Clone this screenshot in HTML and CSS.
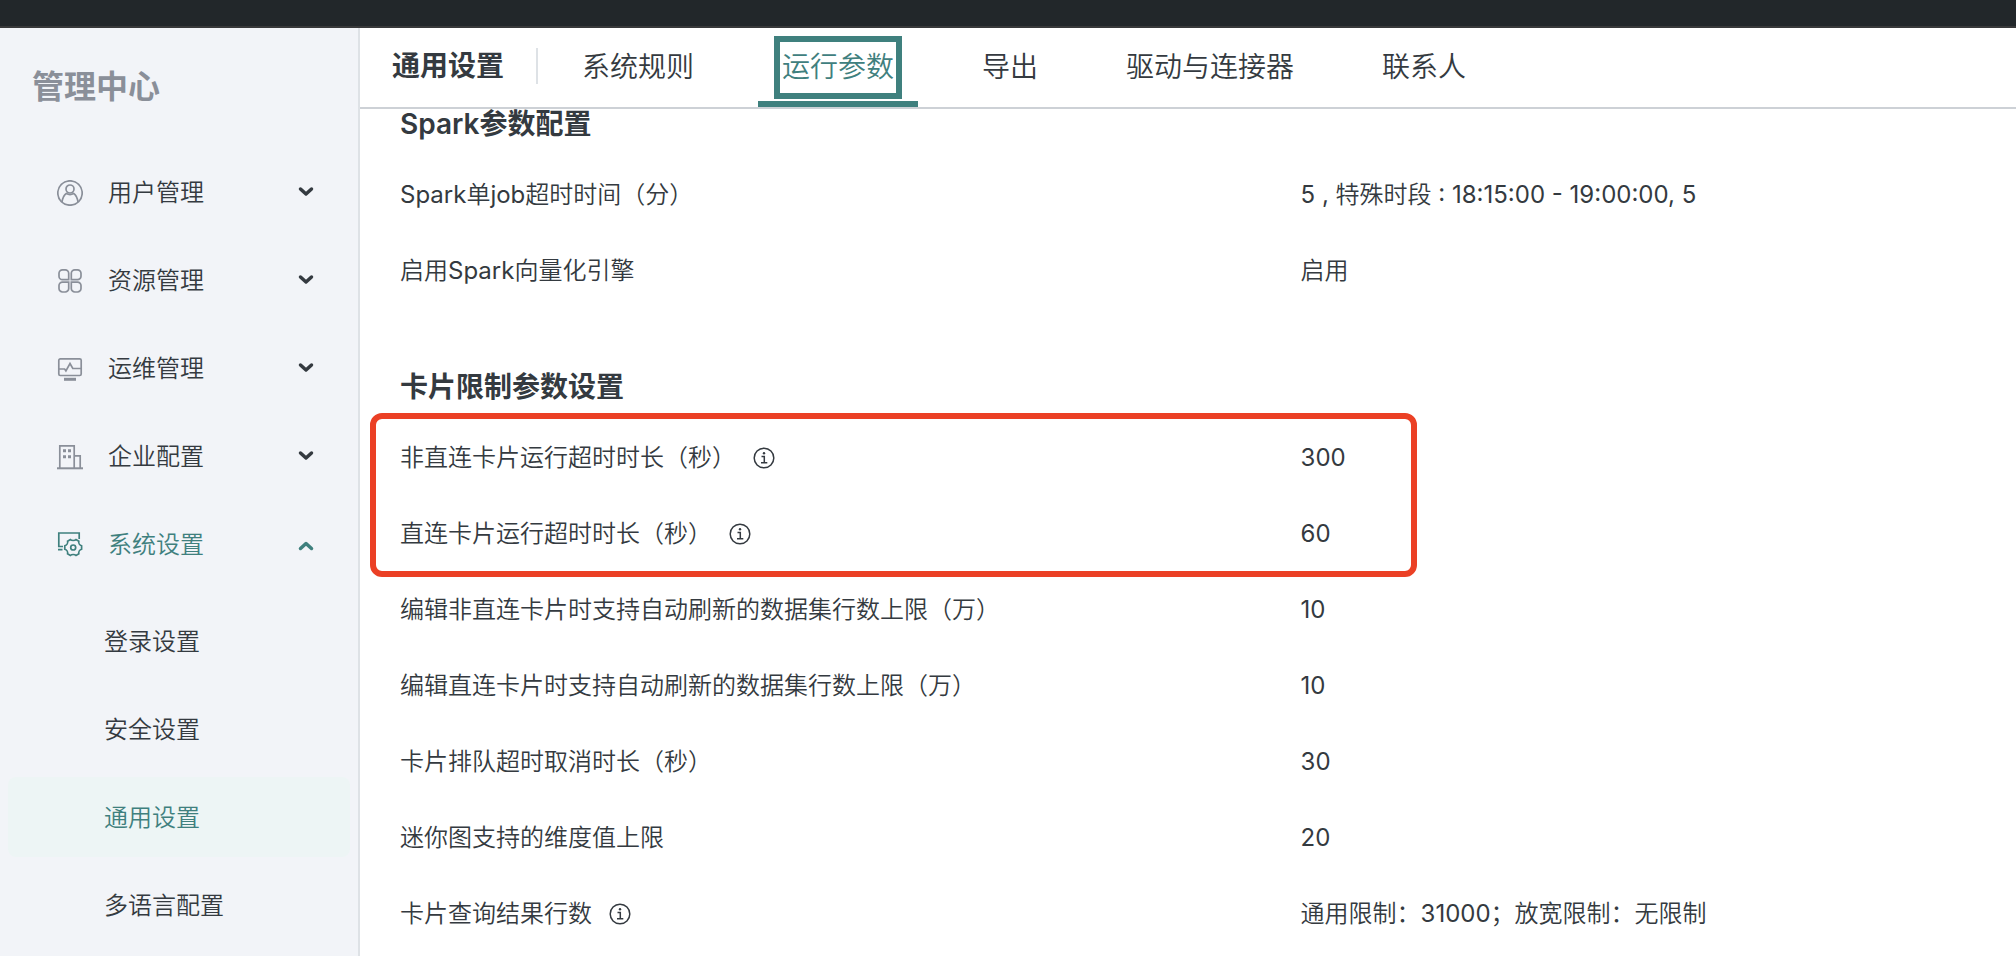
FILE: index.html
```html
<!DOCTYPE html>
<html lang="zh-CN">
  <head>
    <meta charset="UTF-8" />
    <meta name="viewport" content="width=device-width, initial-scale=1.0" />
    <title>管理中心 - 通用设置</title>
    <link rel="stylesheet" href="styles.css">
  </head>
  <body>
    <div class="topbar"></div>

    <div class="layout">
      <!-- Sidebar -->
      <aside class="sidebar">
        <h1 class="sidebar-title">管理中心</h1>

        <nav class="menu">
          <button class="menu-item" type="button" aria-expanded="false">
            <svg class="menu-icon" viewBox="0 0 26 26">
              <circle cx="13" cy="13" r="12.2" />
              <circle cx="13" cy="9" r="4" />
              <path d="M5 22.2c.6-4.400 2.300-7.400 4.300-8.700 2.300 1.300 5.100 1.300 7.400 0 2 1.300 3.700 4.300 4.300 8.700" />
            </svg>
            <span class="menu-label">用户管理</span>
            <svg class="arrow" viewBox="0 0 16 16"><path d="M2.500 4 8 9l5.500-5" /></svg>
          </button>

          <button class="menu-item" type="button" aria-expanded="false">
            <svg class="menu-icon" viewBox="0 0 26 26">
              <path d="M11.700 11.700H5.500A3.500 3.500 0 0 1 2 8.200V5.300a3.500 3.500 0 0 1 3.500-3.500h2.700a3.500 3.500 0 0 1 3.500 3.500z" />
              <path d="M14.300 11.700h6.200A3.500 3.500 0 0 0 24 8.200V5.300a3.500 3.500 0 0 0-3.500-3.500h-2.700a3.500 3.500 0 0 0-3.500 3.500z" />
              <path d="M11.700 14.100H5.500A3.500 3.500 0 0 0 2 17.600v2.900A3.500 3.500 0 0 0 5.500 24h2.700a3.500 3.500 0 0 0 3.500-3.500z" />
              <path d="M14.300 14.100h6.200a3.500 3.500 0 0 1 3.500 3.500v2.900a3.500 3.500 0 0 1-3.500 3.500h-2.700a3.500 3.500 0 0 1-3.500-3.500z" />
            </svg>
            <span class="menu-label">资源管理</span>
            <svg class="arrow" viewBox="0 0 16 16"><path d="M2.500 4 8 9l5.500-5" /></svg>
          </button>

          <button class="menu-item" type="button" aria-expanded="false">
            <svg class="menu-icon" viewBox="0 0 26 26">
              <rect x="1.800" y="2.800" width="22.400" height="16.700" rx="1.500" />
              <path d="M2 13h5.600l1.300 1.800 4.100-7.300 2.800 5h8.200" />
              <path class="thick" d="M7 23.300h12" />
            </svg>
            <span class="menu-label">运维管理</span>
            <svg class="arrow" viewBox="0 0 16 16"><path d="M2.500 4 8 9l5.500-5" /></svg>
          </button>

          <button class="menu-item" type="button" aria-expanded="false">
            <svg class="menu-icon" viewBox="0 0 26 26">
              <path d="M2.800 24V1.800h14.400V24M17.200 11.800h6V24" />
              <path class="base" d="M0 24.300h26" />
              <path class="solid" d="M6 5.300h3v3H6zM11 5.300h3v3h-3zM6 11.300h3v3H6zM11 11.300h3v3h-3z" />
            </svg>
            <span class="menu-label">企业配置</span>
            <svg class="arrow" viewBox="0 0 16 16"><path d="M2.500 4 8 9l5.500-5" /></svg>
          </button>

          <button class="menu-item active" type="button" aria-expanded="true">
            <svg class="menu-icon" viewBox="0 0 26 26">
              <path d="M6 14.500H1.800V1h20.400v6M1 17.700h4.500" />
              <path d="M13.400 7.600c1.300 1.200 4.300 1.200 5.600 0l2.800 1.600c-.4 1.900 1 4 2.800 4.600v3.400c-1.800.6-3.200 2.700-2.800 4.600L19 23.400c-1.300-1.200-4.300-1.200-5.600 0l-2.800-1.600c.4-1.900-1-4-2.800-4.600v-3.400c1.800-.6 3.200-2.700 2.800-4.600z" />
              <circle cx="16.200" cy="15.500" r="2.500" />
            </svg>
            <span class="menu-label">系统设置</span>
            <svg class="arrow" viewBox="0 0 16 16"><path d="M2.500 11.500 8 6.500l5.500 5" /></svg>
          </button>

          <div class="submenu">
            <a class="submenu-item" href="#login">登录设置</a>
            <a class="submenu-item" href="#security">安全设置</a>
            <a class="submenu-item current" href="#general">通用设置</a>
            <a class="submenu-item" href="#language">多语言配置</a>
          </div>
        </nav>
      </aside>

      <!-- Main area -->
      <main class="main">
        <header class="header">
          <h2 class="header-title">通用设置</h2>
          <nav class="tabs">
            <a class="tab" href="#rules">系统规则</a>
            <a class="tab selected" href="#params">运行参数</a>
            <a class="tab" href="#export">导出</a>
            <a class="tab" href="#drivers">驱动与连接器</a>
            <a class="tab" href="#contacts">联系人</a>
          </nav>
        </header>

        <div class="content">
          <section class="section">
            <h3 class="section-title">Spark参数配置</h3>
            <dl class="params">
              <div class="param">
                <dt>Spark单job超时时间（分）</dt>
                <dd>5 , 特殊时段 : 18:15:00 - 19:00:00, 5</dd>
              </div>
              <div class="param">
                <dt>启用Spark向量化引擎</dt>
                <dd>启用</dd>
              </div>
            </dl>
          </section>

          <section class="section">
            <h3 class="section-title">卡片限制参数设置</h3>
            <dl class="params marked">
              <div class="param">
                <dt>
                  非直连卡片运行超时时长（秒）
                  <button class="info" type="button" aria-label="说明">
                    <svg viewBox="0 0 24 24"><circle cx="12" cy="12" r="9.800" /><path d="M9.500 10.500h2.800v6M9 16.700h6.300" /><circle class="dot" cx="12" cy="7.200" r="1.200" /></svg>
                  </button>
                </dt>
                <dd>300</dd>
              </div>
              <div class="param">
                <dt>
                  直连卡片运行超时时长（秒）
                  <button class="info" type="button" aria-label="说明">
                    <svg viewBox="0 0 24 24"><circle cx="12" cy="12" r="9.800" /><path d="M9.500 10.500h2.800v6M9 16.700h6.300" /><circle class="dot" cx="12" cy="7.200" r="1.200" /></svg>
                  </button>
                </dt>
                <dd>60</dd>
              </div>
            </dl>
            <dl class="params">
              <div class="param">
                <dt>编辑非直连卡片时支持自动刷新的数据集行数上限（万）</dt>
                <dd>10</dd>
              </div>
              <div class="param">
                <dt>编辑直连卡片时支持自动刷新的数据集行数上限（万）</dt>
                <dd>10</dd>
              </div>
              <div class="param">
                <dt>卡片排队超时取消时长（秒）</dt>
                <dd>30</dd>
              </div>
              <div class="param">
                <dt>迷你图支持的维度值上限</dt>
                <dd>20</dd>
              </div>
              <div class="param">
                <dt>
                  卡片查询结果行数
                  <button class="info" type="button" aria-label="说明">
                    <svg viewBox="0 0 24 24"><circle cx="12" cy="12" r="9.800" /><path d="M9.500 10.500h2.800v6M9 16.700h6.300" /><circle class="dot" cx="12" cy="7.200" r="1.200" /></svg>
                  </button>
                </dt>
                <dd>通用限制：31000；放宽限制：无限制</dd>
              </div>
            </dl>
          </section>
        </div>
      </main>
    </div>
  </body>
</html>
```

FILE: styles.css
```css
* {
  box-sizing: border-box;
}

body {
  font-family: Inter, "Noto Sans CJK SC DemiLight", "Noto Sans CJK SC", sans-serif;
  font-size: 24px;
  line-height: 32px;
  font-weight: 400;
  margin: 0;
  color: #343a40;
  background-color: #fff;
  min-height: 100vh;
  display: flex;
  flex-direction: column;
}

h1,
h2,
h3,
dl,
dd {
  margin: 0;
}

h1,
h2,
h3 {
  font-family: Inter, "Noto Sans CJK SC", sans-serif;
  font-weight: 600;
}

a {
  color: inherit;
  text-decoration: none;
}

button {
  font: inherit;
  color: inherit;
  background: none;
  border: none;
  padding: 0;
  cursor: pointer;
}

svg {
  display: block;
  fill: none;
  stroke: currentColor;
}

.topbar {
  height: 28px;
  background-color: #22272a;
  border-bottom: 2px solid #38393a;
}

.layout {
  flex: 1;
  display: flex;
}

/* Sidebar */
.sidebar {
  flex: none;
  width: 360px;
  padding: 35px 8px 8px;
  background-color: #f2f4f8;
  border-right: 2px solid #dee2e6;
}

.sidebar-title {
  padding-left: 24px;
  margin-bottom: 42px;
  font-size: 32px;
  line-height: 48px;
  color: #8a8f99;
}

.menu,
.submenu {
  display: flex;
  flex-direction: column;
  gap: 8px;
}

.submenu {
  margin-top: 8px;
}

.menu-item {
  display: flex;
  align-items: center;
  height: 80px;
  padding: 0 36px 0 49px;
  text-align: left;
}

.menu-icon {
  width: 26px;
  height: 26px;
  margin-right: 25px;
  color: #8a8f99;
  stroke-width: 1.7;
}

.menu-icon .thick {
  stroke-width: 3;
}

.menu-icon .base {
  stroke-width: 2;
}

.menu-icon .solid {
  fill: currentColor;
  stroke: none;
}

.menu-label {
  flex: 1;
}

.arrow {
  width: 16px;
  height: 16px;
  stroke-width: 3.5;
  stroke-linecap: round;
  stroke-linejoin: round;
}

.menu-item.active,
.menu-item.active .menu-icon {
  color: #3f807e;
}

.submenu-item {
  height: 80px;
  line-height: 82px;
  padding-left: 96px;
  border-radius: 8px;
}

.submenu-item.current {
  color: #3f807e;
  background-color: #edf5f5;
}

/* Header with tabs */
.main {
  flex: 1;
  min-width: 0;
}

.header {
  display: flex;
  align-items: center;
  height: 81px;
  padding-left: 32px;
  border-bottom: 2px solid #cdd1d6;
  font-size: 28px;
}

.header-title {
  padding-right: 32px;
  margin-bottom: 3px;
  border-right: 2px solid #dee2e6;
  font-size: 28px;
  line-height: 36px;
}

.tabs {
  display: flex;
  gap: 40px;
  height: 100%;
  margin-left: 20px;
}

.tab {
  position: relative;
  padding: 0 24px;
  line-height: 78px;
}

.tab.selected {
  color: #3f807e;
  border-bottom: 6px solid #3f807e;
}

/* Frame around the selected tab */
.tab.selected::before {
  content: "";
  position: absolute;
  inset: 8px 16px 2px;
  border: 6px solid #3f807e;
}

/* Parameter list */
.content {
  padding: 0 40px;
}

.section {
  margin-bottom: 64px;
}

.section:last-child {
  margin-bottom: 0;
}

.section-title {
  margin-bottom: 17px;
  font-size: 28px;
  line-height: 30px;
}

.param {
  display: grid;
  grid-template-columns: 4fr 3fr;
  align-items: center;
  height: 76px;
  padding-top: 2px;
}

.param dt {
  display: flex;
  align-items: center;
  gap: 16px;
}

.info svg {
  width: 24px;
  height: 24px;
  stroke-width: 1.5;
}

.info .dot {
  fill: currentColor;
  stroke: none;
}

.marked {
  position: relative;
}

/* Red frame over the timeout rows, ends after the value column starts */
.marked::after {
  content: "";
  position: absolute;
  inset: -6px calc(100% * 3 / 7 - 116px) -6px -30px;
  border: 6px solid #eb4025;
  border-radius: 12px;
  pointer-events: none;
}
```
